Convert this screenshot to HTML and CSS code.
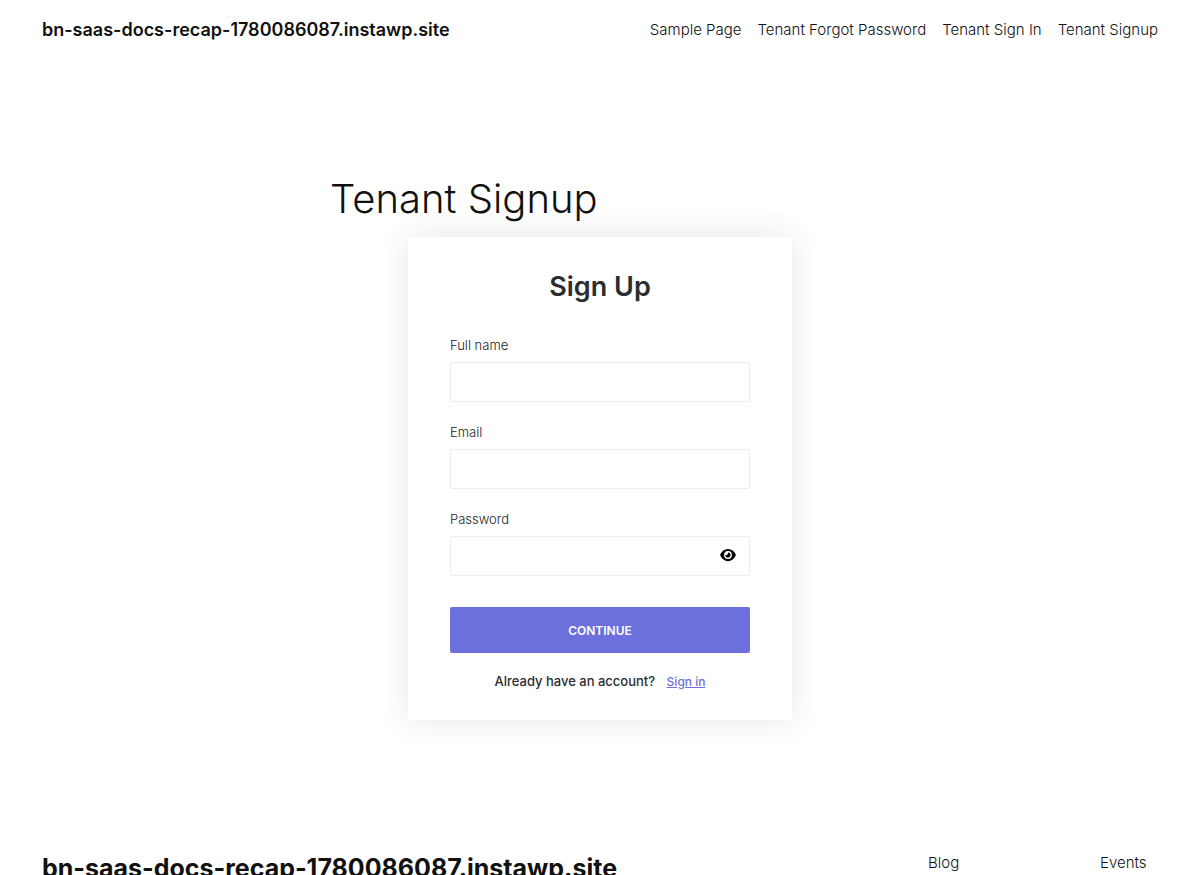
FILE: index.html
```html
<!DOCTYPE html>
<html lang="en">
<head>
  <meta charset="UTF-8" />
  <meta name="viewport" content="width=device-width, initial-scale=1" />
  <title>Tenant Signup</title>
  <link rel="stylesheet" href="styles.css">
</head>
<body>
  <header class="site-header">
    <a class="site-title" href="#">bn-saas-docs-recap-1780086087.instawp.site</a>
    <nav class="site-nav">
      <a href="#">Sample Page</a>
      <a href="#">Tenant Forgot Password</a>
      <a href="#">Tenant Sign In</a>
      <a href="#">Tenant Signup</a>
    </nav>
  </header>

  <main class="content">
    <h1>Tenant Signup</h1>

    <form class="signup">
      <h2>Sign Up</h2>

      <div class="field">
        <label for="fullName">Full name</label>
        <input type="text" id="fullName">
      </div>
      <div class="field">
        <label for="email">Email</label>
        <input type="email" id="email">
      </div>
      <div class="field">
        <label for="password">Password</label>
        <div class="password-box">
          <input type="password" id="password">
          <button type="button" class="eye-btn" aria-label="Show password">
            <svg viewBox="0 0 576 512" width="16" height="14">
              <path d="M288 32c-81 0-145 37-192 80C49 156 18 208 3 244c-3 8-3 17 0 25 15 35 46 87 93 131 47 43 111 80 192 80s145-37 192-80c47-44 78-96 93-131 3-8 3-17 0-25-15-36-46-88-93-132-47-43-111-80-192-80zM144 256a144 144 0 1 1 288 0 144 144 0 1 1-288 0z" fill-rule="evenodd"/>
              <path d="M288 192c0 35-29 64-64 64-7 0-14-1-20-3-6-2-12 1-12 7 0 7 1 14 3 21 14 51 67 82 118 68s82-67 68-118c-11-42-48-70-89-71-6 0-9 6-7 12 2 6 3 13 3 20z"/>
            </svg>
          </button>
        </div>
      </div>

      <button type="submit" class="continue-btn">CONTINUE</button>
      <p class="signin">Already have an account? <a href="#">Sign in</a></p>
    </form>
  </main>

  <footer class="site-footer">
    <a class="footer-title" href="#">bn-saas-docs-recap-1780086087.instawp.site</a>
    <nav class="footer-nav">
      <a href="#">Blog</a>
      <a href="#">Events</a>
    </nav>
  </footer>
</body>
</html>
```
FILE: styles.css
```css
* {
  box-sizing: border-box;
}

body {
  margin: 0;
  font-family: Inter, sans-serif;
  font-size: 15px;
  font-weight: 300;
  line-height: 20px;
  color: #111111;
  background: #ffffff;
}

a {
  color: inherit;
  text-decoration: none;
}

.site-header {
  display: flex;
  justify-content: space-between;
  align-items: center;
  padding: 20px 42px;
}

.site-title {
  font-size: 18px;
  font-weight: 600;
}

.site-nav {
  display: flex;
  gap: 16px;
}

.content {
  max-width: 540px;
  margin: 115px auto 0;
}

h1 {
  margin: 0 0 14px;
  font-size: 40px;
  font-weight: 300;
  line-height: 48px;
}

.signup {
  max-width: 384px;
  margin: 0 auto;
  padding: 30px 42px 28px;
  background: #ffffff;
  box-shadow: 0 0 30px rgba(0, 0, 0, 0.1);
  font-size: 13px;
}

h2 {
  margin: 0 0 28px;
  font-size: 27px;
  font-weight: 600;
  line-height: 40px;
  text-align: center;
  color: #2b2d2f;
}

.field {
  margin-bottom: 20px;
}

.field label {
  display: block;
  margin-bottom: 7px;
  color: #222222;
}

.field input {
  display: block;
  width: 100%;
  height: 40px;
  padding: 8px 12px;
  border: 1px solid #e8ecee;
  border-radius: 2px;
  background: #ffffff;
  font: inherit;
}

.password-box {
  position: relative;
}

.eye-btn {
  position: absolute;
  top: 12px;
  right: 14px;
  display: flex;
  padding: 0;
  border: none;
  background: none;
  cursor: pointer;
}

.continue-btn {
  width: 100%;
  height: 46px;
  margin-top: 11px;
  border: none;
  border-radius: 2px;
  background: #6c70dc;
  color: #ffffff;
  font-family: inherit;
  font-size: 12px;
  font-weight: 600;
  cursor: pointer;
}

.signin {
  margin: 18px 0 0;
  font-weight: 500;
  text-align: center;
  color: #2b2d2f;
}

.signin a {
  margin-left: 8px;
  color: #6c70dc;
  font-size: 12px;
  text-decoration: underline;
}

.site-footer {
  display: flex;
  justify-content: space-between;
  margin-top: 133px;
  padding: 0 42px 60px;
}

.footer-title {
  font-size: 25px;
  font-weight: 700;
  line-height: 30px;
}

.footer-nav {
  display: grid;
  grid-template-columns: 172px 58px;
}
```
